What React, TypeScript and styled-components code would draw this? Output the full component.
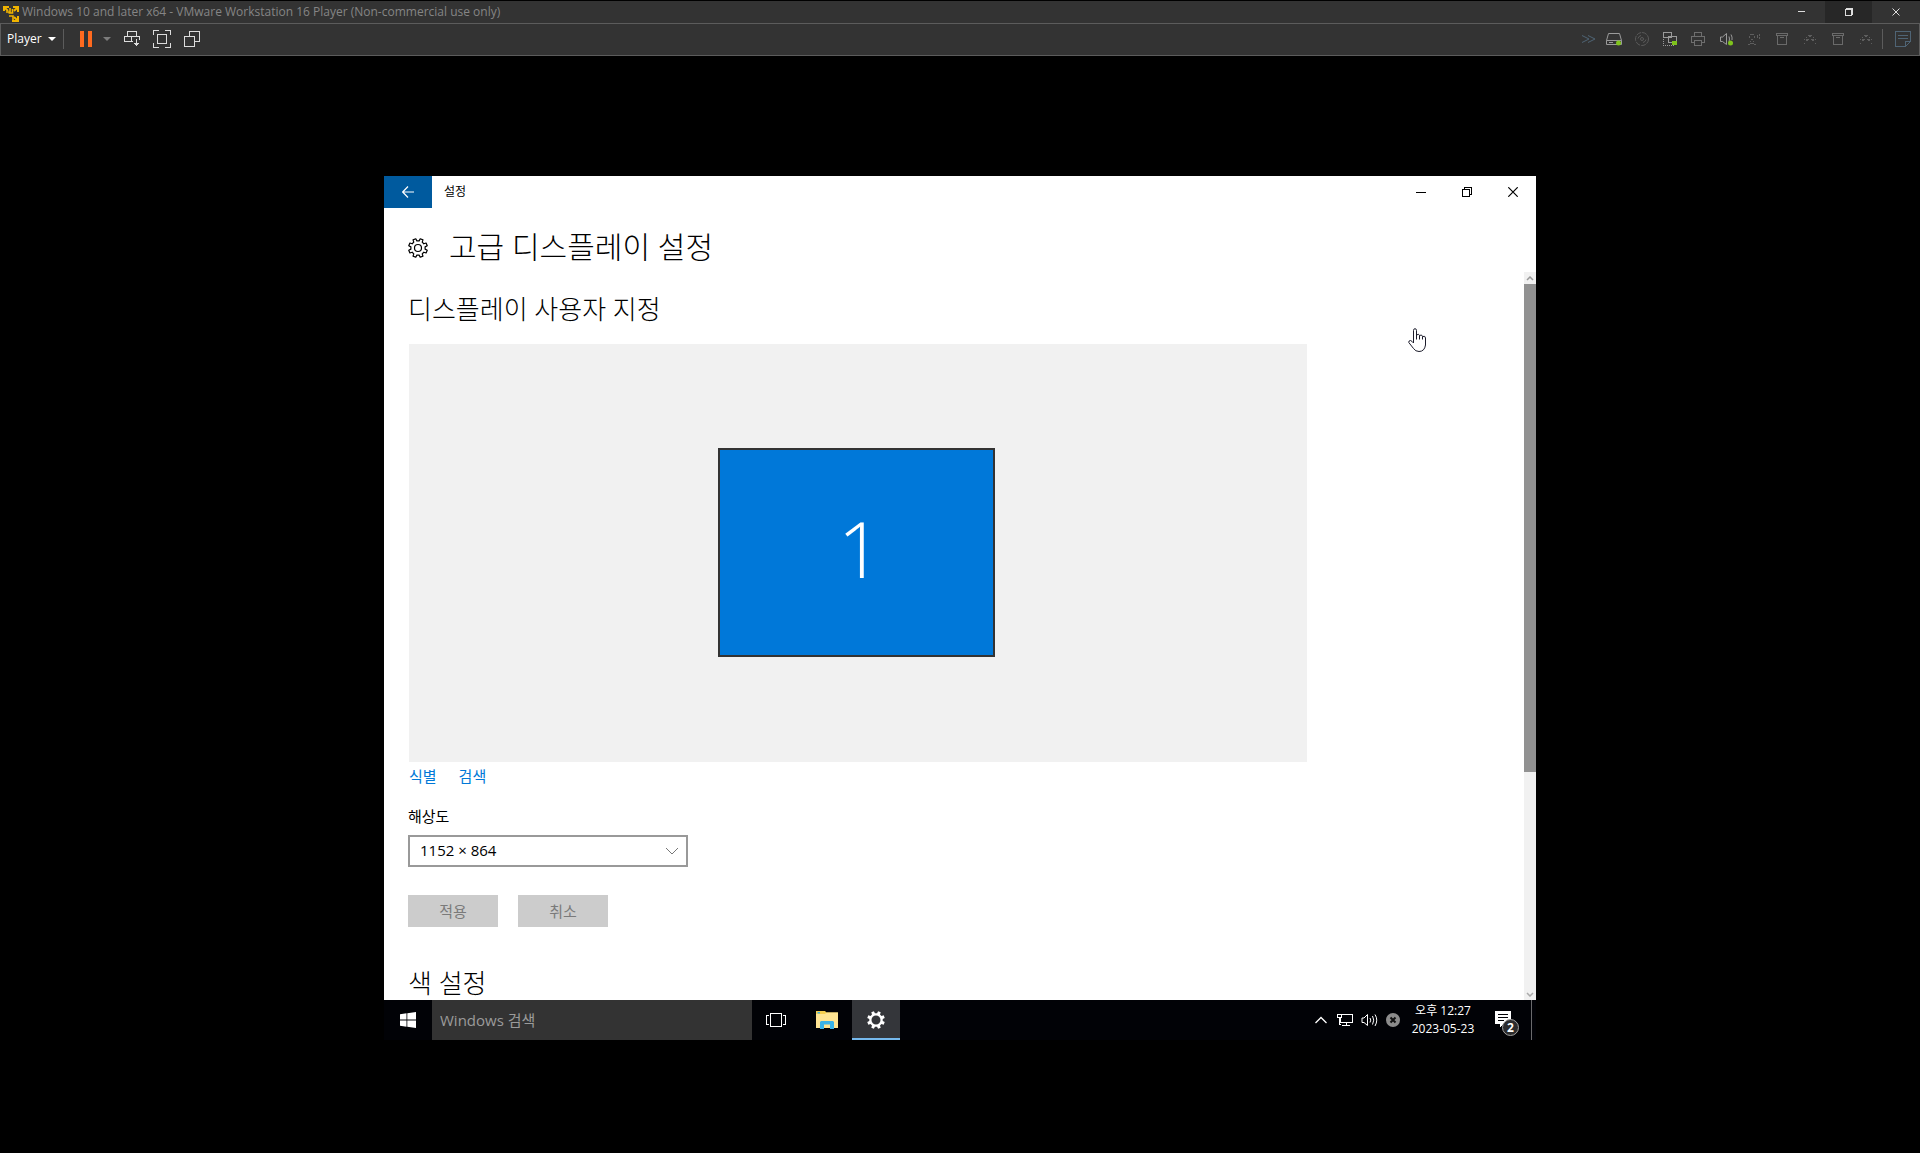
import React from "react";
import styled, { createGlobalStyle, css } from "styled-components";

const UI_FONT = `"Open Sans", "Noto Sans CJK KR", sans-serif`;

const GlobalStyle = createGlobalStyle`
  *, *::before, *::after { box-sizing: border-box; }
  body { margin: 0; background: #000; font-family: ${UI_FONT}; }
  button, select, input { font: inherit; color: inherit; margin: 0; border-radius: 0; }
  button { padding: 0; border: 0; background: none; }
  h1, h2, p { margin: 0; font-weight: 300; }
`;

/* ---------- Host window ---------- */

const Page = styled.div`
  display: flex;
  flex-direction: column;
  min-height: 100vh;
  padding-top: 1px;
  background: #000;
`;

const HostTitleBar = styled.header`
  display: flex;
  align-items: center;
  height: 22px;
  padding-right: 1px;
  background: #333;
  color: #858585;
`;

const HostTitle = styled.span`
  flex: 1;
  padding-left: 3px;
  font-size: 12px;
  line-height: 20px;
  white-space: nowrap;
`;

const HostWindowButton = styled.button<{ $active?: boolean }>`
  display: grid;
  place-items: center;
  width: 47px;
  height: 22px;
  background: ${(p) => (p.$active ? "#272727" : "transparent")};
`;

const HostToolbar = styled.nav`
  display: flex;
  align-items: center;
  justify-content: space-between;
  height: 33px;
  padding-bottom: 1px;
  background: #333;
  border: 1px solid #5c5c5c;
`;

const ToolGroup = styled.div`
  display: flex;
  align-items: center;
`;

const PlayerMenu = styled.button`
  display: flex;
  align-items: center;
  gap: 6px;
  width: 63px;
  height: 20px;
  margin-right: 8px;
  padding-left: 6px;
  border-right: 1px solid #5c5c5c;
  color: #fff;
  font-size: 12px;
  line-height: 20px;
`;

const ToolButton = styled.button<{ $width?: number }>`
  display: grid;
  place-items: center;
  width: ${(p) => p.$width ?? 28}px;
  height: 28px;
`;

const Divider = styled.span`
  width: 1px;
  height: 20px;
  margin: 0 4px 0 2px;
  background: #5c5c5c;
`;

const Stage = styled.main`
  flex: 1;
  display: flex;
  align-items: center;
  justify-content: center;
  padding-top: 7px;
`;

const GuestScreen = styled.section`
  position: relative;
  display: flex;
  flex-direction: column;
  width: 60%;
  aspect-ratio: 4 / 3;
  background: #fff;
  color: #000;
`;

/* ---------- Settings window ---------- */

const SettingsWindow = styled.div`
  flex: 1;
  min-height: 0;
  display: flex;
  flex-direction: column;
`;

const AppTitleBar = styled.div`
  display: flex;
  align-items: center;
  height: 32px;
  font-size: 12px;
`;

const BackButton = styled.button`
  display: grid;
  place-items: center;
  width: 48px;
  height: 32px;
  background: #005a9e;
`;

const AppName = styled.span`
  flex: 1;
  padding-left: 12px;
  line-height: 20px;
`;

const AppWindowButton = styled.button`
  display: grid;
  place-items: center;
  width: 46px;
  height: 32px;
`;

const PageHeader = styled.div`
  display: flex;
  align-items: center;
  gap: 21px;
  height: 64px;
  padding: 15px 24px 0;
`;

const PageTitle = styled.h1`
  padding-bottom: 2px;
  font-size: 30px;
  line-height: 36px;
`;

const ScrollArea = styled.div`
  flex: 1;
  min-height: 0;
  display: flex;
`;

const Content = styled.div`
  flex: 1;
  overflow: hidden;
  padding: 21px 24px 0;
`;

const Column = styled.div`
  max-width: 900px;
`;

const SectionTitle = styled.h2`
  font-size: 26px;
  line-height: 32px;
`;

const Preview = styled.div`
  display: grid;
  place-items: center;
  height: 418px;
  margin: 19px 1px 4px;
  padding: 0 4px 2px 0;
  background: #f1f1f1;
`;

const Monitor = styled.button`
  width: 277px;
  height: 209px;
  padding: 0 0 8px 8px;
  border: 2px solid #333;
  background: #0078d9;
  color: #fff;
  font-size: 78px;
  font-weight: 300;
  line-height: 100px;
`;

const LinkRow = styled.div`
  display: flex;
  gap: 22px;
  padding-left: 1px;
`;

const TextLink = styled.a`
  color: #0078d7;
  font-size: 15px;
  line-height: 20px;
  text-decoration: none;
`;

const FieldLabel = styled.label`
  display: block;
  margin: 20px 0 9px;
  font-size: 15px;
  line-height: 20px;
`;

const SelectBox = styled.div`
  position: relative;
  width: 280px;

  svg {
    position: absolute;
    right: 9px;
    top: 12px;
    pointer-events: none;
  }
`;

const Select = styled.select`
  appearance: none;
  width: 100%;
  height: 32px;
  padding: 0 32px 2px 10px;
  border: 2px solid #999;
  background: #fff;
  font-size: 15px;
  line-height: 20px;
`;

const ActionRow = styled.div`
  display: flex;
  gap: 20px;
  margin: 28px 0 40px;
`;

const ActionButton = styled.button`
  width: 90px;
  height: 32px;
  background: #ccc;
  color: #7a7a7a;
  font-size: 15px;
  line-height: 20px;
`;

const ScrollBar = styled.div`
  display: flex;
  flex-direction: column;
  width: 12px;
  background: #f1f1f1;
`;

const ScrollArrow = styled.button`
  display: grid;
  place-items: center;
  width: 12px;
  height: 12px;
`;

const ScrollTrack = styled.div`
  flex: 1;
`;

const ScrollThumb = styled.div`
  height: 69.3%;
  background: #919191;
`;

const HandCursor = styled.svg`
  position: absolute;
  left: 1024px;
  top: 152px;
  pointer-events: none;
`;

/* ---------- Guest taskbar ---------- */

const Taskbar = styled.footer`
  display: flex;
  height: 40px;
  background: #010206;
  color: #fff;
`;

const TaskButton = styled.button<{ $active?: boolean }>`
  display: grid;
  place-items: center;
  width: 48px;
  height: 40px;
  ${(p) =>
    p.$active &&
    css`
      background: #34363a;
      box-shadow: inset 0 -2px #76b9ed;
    `}
`;

const SearchInput = styled.input`
  width: 320px;
  height: 40px;
  padding: 0 8px;
  border: 0;
  background: #333;
  font-size: 15px;

  &::placeholder {
    color: #9b9b9b;
    opacity: 1;
  }
`;

const TaskApps = styled.div`
  flex: 1;
  display: flex;
  gap: 1px;
  padding-left: 3px;
`;

const TrayButton = styled.button`
  display: grid;
  place-items: center;
  width: 24px;
  height: 40px;
`;

const Clock = styled.button`
  display: flex;
  flex-direction: column;
  align-items: center;
  width: 76px;
  height: 40px;
  padding-top: 2px;
  font-size: 12px;
  line-height: 18px;
`;

const ActionCenter = styled.button`
  position: relative;
  width: 50px;
  height: 40px;

  svg {
    display: block;
    margin: -3px 0 0 14px;
  }
`;

const Badge = styled.span`
  position: absolute;
  left: 21px;
  top: 19px;
  width: 17px;
  height: 17px;
  border: 1px solid #a0a0a0;
  border-radius: 50%;
  background: #2b2b2d;
  font-size: 12px;
  font-weight: 700;
  line-height: 15px;
  text-align: center;
`;

const ShowDesktop = styled.button`
  width: 5px;
  height: 40px;
  border-left: 1px solid #6a6a6c;
`;

/* ---------- Icons ---------- */

type IconProps = {
  w: number;
  h: number;
  color?: string;
  crisp?: boolean;
  children: React.ReactNode;
};

const Icon = ({ w, h, color = "#000", crisp, children }: IconProps) => (
  <svg
    width={w}
    height={h}
    viewBox={`0 0 ${w} ${h}`}
    fill="none"
    stroke={color}
    shapeRendering={crisp ? "crispEdges" : "auto"}
    aria-hidden="true"
  >
    {children}
  </svg>
);

const gearPath = (c: number, outer: number, inner: number, teeth = 8) => {
  const step = (Math.PI * 2) / teeth;
  const points: string[] = [];
  for (let i = 0; i < teeth; i++) {
    const a = i * step + step / 2;
    [
      [inner, -0.3],
      [outer, -0.2],
      [outer, 0.2],
      [inner, 0.3],
    ].forEach(([r, f]) => {
      const t = a + f * step;
      points.push(`${(c + r * Math.cos(t)).toFixed(2)} ${(c + r * Math.sin(t)).toFixed(2)}`);
    });
  }
  return `M${points.join("L")}Z`;
};

const VmwareLogo = () => (
  <Icon w={19} h={20} color="#f0b400">
    <path d="M4 9V5H9M13 5H18V10M18 14V19H12" strokeWidth="2" />
    <path d="M4.500 5.500L8 9M17.500 5.500L14 9M17.500 18.500L14 15" strokeWidth="2" />
    <path d="M6 10H10V6M12.500 7V11H8.500M13 19V14H9" strokeWidth="1.600" />
  </Icon>
);

const Caret = ({ color }: { color: string }) => (
  <Icon w={8} h={4} color="none">
    <path d="M0 0H8L4 4Z" fill={color} />
  </Icon>
);

const GreenDot = ({ x, y }: { x: number; y: number }) => (
  <circle cx={x} cy={y} r="2.500" fill="#7fc31c" stroke="none" />
);

const ArchiveIcon = () => (
  <Icon w={14} h={14} color="#6a6a6a" crisp>
    <path d="M1.500 1.500H12.500V3.500H1.500ZM2.500 3.500V12.500H11.500V3.500M5 5.500H9" />
  </Icon>
);

const LinkDashIcon = () => (
  <Icon w={14} h={14} color="#5e5e5e" crisp>
    <path d="M5 3.500h4M6 4.500h2M3 5.500h1M10 5.500h1M1 7.500h1M3 7.500h3M8 7.500h3M12 7.500h1M3 8.500h2M9 8.500h2M1 11.500h1M12 11.500h1" />
  </Icon>
);

const devices: { label: string; icon: React.ReactNode }[] = [
  {
    label: "Hard disk",
    icon: (
      <Icon w={18} h={16} color="#9a9a9a">
        <path d="M3.500 2.500H14.500L16.500 9.500V13.500H1.500V9.500ZM1.500 9.500H16.500M4 11.500H8" />
        <GreenDot x={13.5} y={12} />
      </Icon>
    ),
  },
  {
    label: "CD/DVD",
    icon: (
      <Icon w={16} h={16} color="#5a5a5a">
        <circle cx="8" cy="8" r="6.500" strokeDasharray="5 1" />
        <circle cx="8" cy="8" r="1.500" />
        <path d="M4 7.500A4 4 0 0 1 7 4.500M12 8.500A4 4 0 0 1 9 11.500" />
      </Icon>
    ),
  },
  {
    label: "Network adapter",
    icon: (
      <Icon w={16} h={16} color="#9a9a9a" crisp>
        <path d="M1.500 1.500H9.500V6.500H1.500ZM6.500 5.500H14.500V11.500H6.500Z" fill="#333" />
        <path d="M1.500 8V14.500H12" strokeDasharray="1 1" />
        <GreenDot x={12.5} y={12} />
      </Icon>
    ),
  },
  {
    label: "Printer",
    icon: (
      <Icon w={16} h={16} color="#6e6e6e" crisp>
        <path d="M4.500 6V1.500H11.500V6M4 11.500H1.500V5.500H14.500V11.500H12M4.500 9.500H11.500V14.500H4.500Z" />
      </Icon>
    ),
  },
  {
    label: "Sound",
    icon: (
      <Icon w={16} h={16} color="#9a9a9a">
        <path d="M2.500 6V10.500H4.500L8.500 13.500V2.500L4.500 6Z" />
        <path d="M11 5.500Q12 8 11 10.500M13 3.500Q14.500 6 14 9" />
        <GreenDot x={12.5} y={12} />
      </Icon>
    ),
  },
  {
    label: "Camera",
    icon: (
      <Icon w={14} h={14} color="#5e5e5e" crisp>
        <path d="M3 2.500h4M2.500 4v2M7.500 4v2M4 7.500h2M3 9.500h1M6 9.500h1M1 12.500h2M7 12.500h2M3 11.500h4M10.500 3v3M12.500 2v2M12.500 5v2" />
      </Icon>
    ),
  },
  { label: "USB device 1", icon: <ArchiveIcon /> },
  { label: "USB device 2", icon: <LinkDashIcon /> },
  { label: "USB device 3", icon: <ArchiveIcon /> },
  { label: "USB device 4", icon: <LinkDashIcon /> },
];

/* ---------- App ---------- */

export default function App() {
  return (
    <Page>
      <GlobalStyle />
      <HostTitleBar>
        <VmwareLogo />
        <HostTitle>Windows 10 and later x64 - VMware Workstation 16 Player (Non-commercial use only)</HostTitle>
        <HostWindowButton aria-label="Minimize host">
          <Icon w={8} h={2} color="#ddd" crisp><path d="M0 .5H7" /></Icon>
        </HostWindowButton>
        <HostWindowButton aria-label="Restore host" $active>
          <Icon w={8} h={8} color="none" crisp>
            <path d="M1 0H8V7H7V8H0V1H1ZM1 2V7H6V2Z" fill="#ddd" fillRule="evenodd" />
          </Icon>
        </HostWindowButton>
        <HostWindowButton aria-label="Close host">
          <Icon w={8} h={8} color="#ddd"><path d="M.5 .5L7.500 7.500M7.500 .5L.5 7.500" /></Icon>
        </HostWindowButton>
      </HostTitleBar>
      <HostToolbar>
        <ToolGroup>
          <PlayerMenu>Player <Caret color="#fff" /></PlayerMenu>
          <ToolButton aria-label="Pause">
            <Icon w={12} h={16} color="none"><path d="M0 0H4V16H0ZM8 0H12V16H8Z" fill="#ff6a1f" /></Icon>
          </ToolButton>
          <ToolButton aria-label="Power options" $width={14}>
            <Caret color="#7c7c7c" />
          </ToolButton>
          <ToolButton aria-label="Send Ctrl+Alt+Del" $width={36}>
            <Icon w={18} h={18} color="#ddd" crisp>
              <path d="M4.500 1.500H13.500V6.500H4.500ZM10 11.500H1.500V6.500H16.500V10M8.500 6.500V11.500M13.500 9V16M11 13.500H16M12 14.500H15" />
            </Icon>
          </ToolButton>
          <ToolButton aria-label="Full screen" $width={24}>
            <Icon w={18} h={18} color="#ddd" crisp>
              <path d="M.5 5V.5H6M12 .5H17.500V5M17.500 13V17.500H12M6 17.500H.5V13M4.500 4.500H13.500V13.500H4.500Z" />
            </Icon>
          </ToolButton>
          <ToolButton aria-label="Unity" $width={36}>
            <Icon w={16} h={16} color="#ddd" crisp>
              <path d="M.5 5.500H10.500V15.500H.5ZM5.500 5V.5H15.500V10.500H11" />
            </Icon>
          </ToolButton>
        </ToolGroup>
        <ToolGroup>
          <ToolButton aria-label="Show devices" $width={22}>
            <Icon w={14} h={8} color="#4f6475">
              <path d="M0 .5L7 4L0 7.500M6 .5L13 4L6 7.500" />
            </Icon>
          </ToolButton>
          {devices.map((d) => (
            <ToolButton key={d.label} aria-label={d.label}>{d.icon}</ToolButton>
          ))}
          <Divider />
          <ToolButton aria-label="Message log" $width={32}>
            <Icon w={16} h={16} color="#4f6475" crisp>
              <path d="M.5 .5H15.500V10.500L10.500 15.500H.5ZM10.500 15V10.500H15M3 4.500H13M3 7.500H13" />
            </Icon>
          </ToolButton>
        </ToolGroup>
      </HostToolbar>

      <Stage>
        <GuestScreen>
          <SettingsWindow>
            <AppTitleBar>
              <BackButton aria-label="뒤로">
                <Icon w={12} h={12} color="#fff">
                  <path d="M12 6H1M6 .5L.7 6L6 11.500" strokeWidth="1.200" />
                </Icon>
              </BackButton>
              <AppName>설정</AppName>
              <AppWindowButton aria-label="최소화">
                <Icon w={10} h={1} crisp><path d="M0 .5H10" /></Icon>
              </AppWindowButton>
              <AppWindowButton aria-label="이전 크기로 복원">
                <Icon w={10} h={10} crisp><path d="M.5 2.500H7.500V9.500H.5ZM2.500 2V.5H9.500V7.500H8" /></Icon>
              </AppWindowButton>
              <AppWindowButton aria-label="닫기">
                <Icon w={10} h={10}><path d="M.3 .3L9.700 9.700M9.700 .3L.3 9.700" strokeWidth="1.200" /></Icon>
              </AppWindowButton>
            </AppTitleBar>
            <PageHeader>
              <Icon w={20} h={20}>
                <path d={gearPath(10, 9.5, 7.2)} strokeWidth="1.200" strokeLinejoin="round" />
                <circle cx="10" cy="10" r="3.500" strokeWidth="1.200" />
              </Icon>
              <PageTitle>고급 디스플레이 설정</PageTitle>
            </PageHeader>
            <ScrollArea>
              <Content>
                <Column>
                  <SectionTitle>디스플레이 사용자 지정</SectionTitle>
                  <Preview><Monitor>1</Monitor></Preview>
                  <LinkRow>
                    <TextLink href="#identify">식별</TextLink>
                    <TextLink href="#detect">검색</TextLink>
                  </LinkRow>
                  <FieldLabel htmlFor="resolution">해상도</FieldLabel>
                  <SelectBox>
                    <Select id="resolution" defaultValue="1152x864">
                      <option value="1152x864">1152 × 864</option>
                    </Select>
                    <Icon w={14} h={8} color="#777"><path d="M1 1L7 7L13 1" /></Icon>
                  </SelectBox>
                  <ActionRow>
                    <ActionButton disabled>적용</ActionButton>
                    <ActionButton disabled>취소</ActionButton>
                  </ActionRow>
                  <SectionTitle>색 설정</SectionTitle>
                </Column>
              </Content>
              <ScrollBar>
                <ScrollArrow aria-label="위로 스크롤">
                  <Icon w={8} h={5} color="#999"><path d="M1 4L4 1L7 4" strokeWidth="1.500" /></Icon>
                </ScrollArrow>
                <ScrollTrack><ScrollThumb /></ScrollTrack>
                <ScrollArrow aria-label="아래로 스크롤">
                  <Icon w={8} h={5} color="#aaa"><path d="M1 1L4 4L7 1" strokeWidth="1.500" /></Icon>
                </ScrollArrow>
              </ScrollBar>
            </ScrollArea>
          </SettingsWindow>

          <Taskbar>
            <TaskButton aria-label="시작">
              <Icon w={16} h={16} color="none">
                <path d="M0 2.200L6.500 1.300V7.500H0ZM7.300 1.200L16 0V7.500H7.300ZM0 8.400H6.500V14.700L0 13.800ZM7.300 8.400H16V16L7.300 14.800Z" fill="#fff" />
              </Icon>
            </TaskButton>
            <SearchInput type="search" aria-label="Windows 검색" placeholder="Windows 검색" />
            <TaskButton aria-label="작업 보기">
              <Icon w={20} h={14} color="#fff" crisp>
                <path d="M4.500 .5H15.500V13.500H4.500ZM3 2.500H.5V11.500H3M17 2.500H19.500V11.500H17" />
              </Icon>
            </TaskButton>
            <TaskApps>
              <TaskButton aria-label="파일 탐색기">
                <Icon w={22} h={18} color="none">
                  <path d="M0 0H9L10.500 1.500H22V17H0Z" fill="#f5cf50" />
                  <path d="M0 3H9L10.500 1.500H22V17H0Z" fill="#ffe593" />
                  <path d="M1.500 1H4V2.500H1.500Z" fill="#3db3e3" />
                  <path d="M4 11L5 10H17L18 11V18H14V13.500H8V18H4Z" fill="#3bb4e8" />
                </Icon>
              </TaskButton>
              <TaskButton aria-label="설정" $active>
                <Icon w={18} h={18} color="none">
                  <path d={gearPath(9, 9, 6.8) + "M9 4.500A4.500 4.500 0 1 0 9 13.500A4.500 4.500 0 1 0 9 4.500Z"} fill="#fff" fillRule="evenodd" />
                </Icon>
              </TaskButton>
            </TaskApps>
            <TrayButton aria-label="숨겨진 아이콘 표시">
              <Icon w={12} h={8} color="#fff"><path d="M.5 7L6 1.500L11.500 7" strokeWidth="1.300" /></Icon>
            </TrayButton>
            <TrayButton aria-label="네트워크">
              <Icon w={16} h={14} color="#fff" crisp>
                <path d="M5 1.500H15.500V9.500H3.500V5M9.500 10V12.500M5 12.500H13M.5 1.500H4.500V4.500H.5ZM2.500 5V11.500H4" />
              </Icon>
            </TrayButton>
            <TrayButton aria-label="볼륨">
              <Icon w={17} h={14} color="#fff">
                <path d="M1 5V9.500H3L6.500 12.500V1.500L3 5ZM9 5Q10.500 7 9 9.500M11.500 3Q14 7 11.500 11.500M14 1.500Q17.500 7 14 13" />
              </Icon>
            </TrayButton>
            <TrayButton aria-label="상태">
              <Icon w={14} h={14} color="#111">
                <circle cx="7" cy="7" r="7" fill="#8c8c8c" stroke="none" />
                <path d="M4.500 4.500L9.500 9.500M9.500 4.500L4.500 9.500" strokeWidth="2" />
              </Icon>
            </TrayButton>
            <Clock><span>오후 12:27</span><span>2023-05-23</span></Clock>
            <ActionCenter aria-label="알림 센터">
              <Icon w={16} h={16} color="#010206" crisp>
                <path d="M0 0H16V13H9L5 16V13H0Z" fill="#fff" stroke="none" />
                <path d="M3 3.500H13M3 6.500H13M3 9.500H9" />
              </Icon>
              <Badge>2</Badge>
            </ActionCenter>
            <ShowDesktop aria-label="바탕 화면 보기" />
          </Taskbar>

          <HandCursor width="19" height="25" viewBox="0 0 19 25" fill="#fff" stroke="#1c1c2b" strokeLinejoin="round" aria-hidden="true">
            <path d="M5.500 15V2.500Q5.500 .7 7 .7Q8.500 .7 8.500 2.500V7Q11 5.300 11.500 7.500Q14 6 14.500 8.500Q17.500 7.500 17.500 10V17Q16.500 23.500 11 23.500Q7.500 23.500 5.500 20.500L.8 14.500Q.5 12.500 2.500 12.500Q4 13 5.500 15Z" />
            <path d="M8.500 7V11.500M11.500 7.500V11.500M14.500 8.500V11.500" />
          </HandCursor>
        </GuestScreen>
      </Stage>
    </Page>
  );
}
